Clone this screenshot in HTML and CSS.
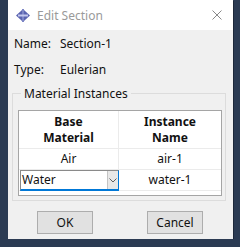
FILE: index.html
```html
<!DOCTYPE html>
<html lang="en">
<head>
  <meta charset="UTF-8">
  <title>Edit Section</title>
  <link rel="stylesheet" href="styles.css">
</head>
<body>
  <div class="dialog">
    <div class="titlebar">
      <svg class="app-icon" width="14" height="13" viewBox="0 0 14 13">
        <polygon points="0,6.5 6,1 6,12" fill="#5b64b0"/>
        <polygon points="14,6.5 8,1 8,12" fill="#5b64b0"/>
        <rect x="6" y="0" width="2" height="13" fill="#7d86c6"/>
        <rect x="2" y="5.5" width="10" height="2" fill="#c3c8ee"/>
      </svg>
      <span class="title">Edit Section</span>
      <svg class="close" width="10" height="10" viewBox="0 0 10 10">
        <path d="M0.5 0.5 L9.5 9.5 M9.5 0.5 L0.5 9.5" stroke="#888" stroke-width="1"/>
      </svg>
    </div>
    <div class="content">
      <div class="field"><span class="key">Name:</span><span>Section-1</span></div>
      <div class="field"><span class="key">Type:</span><span>Eulerian</span></div>
      <div class="group">
        <span class="legend">Material Instances</span>
        <div class="table">
          <div class="row head">
            <div class="cell">Base<br>Material</div>
            <div class="cell">Instance<br>Name</div>
          </div>
          <div class="row">
            <div class="cell">Air</div>
            <div class="cell">air-1</div>
          </div>
          <div class="row">
            <div class="cell combo">
              <span>Water</span>
              <span class="arrow">
                <svg width="8" height="5" viewBox="0 0 8 5"><path d="M0.5 0.5 L4 4 L7.5 0.5" fill="none" stroke="#606060" stroke-width="1"/></svg>
              </span>
            </div>
            <div class="cell">water-1</div>
          </div>
        </div>
      </div>
      <div class="buttons">
        <button class="btn">OK</button>
        <button class="btn">Cancel</button>
      </div>
    </div>
  </div>
</body>
</html>
```

FILE: styles.css
```css
body {
  margin: 0;
  background-color: #2b3b53;
  font-family: "Noto Sans", "Open Sans", sans-serif;
  font-size: 12px;
  color: #111;
  padding-left: 8px;
}
.dialog {
  width: 225px;
  height: 239px;
  background-color: #f0f0f0;
  display: flex;
  flex-direction: column;
  box-shadow: 1px 1px 0 #1d283a;
}
.titlebar {
  height: 30px;
  background-color: #fff;
  display: flex;
  align-items: center;
  padding-left: 8px;
  padding-right: 11px;
}
.app-icon {
  margin-right: 7px;
}
.title {
  color: #9a9a9a;
  flex: 1;
}
.content {
  flex: 1;
  padding: 1px 7px 0 4px;
  display: flex;
  flex-direction: column;
}
.field {
  display: flex;
  height: 26px;
  line-height: 16px;
  align-items: center;
  padding-left: 2px;
}
.key {
  width: 46px;
}
.group {
  position: relative;
  margin-top: 10px;
  height: 108px;
  box-sizing: border-box;
  border: 1px solid #dcdcdc;
  padding: 16px 3px 4px 5px;
}
.legend {
  position: absolute;
  top: -8px;
  left: 8px;
  padding: 0 3px;
  line-height: 16px;
  background-color: #f0f0f0;
}
.table {
  background-color: #fff;
  border: 1px solid #a5a5a5;
  height: 86px;
  box-sizing: border-box;
}
.row {
  display: grid;
  grid-template-columns: 100px 1fr;
  height: 20px;
  border-bottom: 1px solid #ebebeb;
}
.row.head {
  height: 37px;
  font-weight: bold;
}
.cell {
  display: flex;
  align-items: center;
  justify-content: center;
  text-align: center;
  line-height: 16px;
}
.cell:first-child {
  border-right: 1px solid #ebebeb;
}
.combo {
  justify-content: space-between;
  border: 1px solid #8a8a8a;
  border-bottom: 2px solid #0078d7;
  margin: 0 0 -1px 1px;
  padding-left: 1px;
  background-color: #fff;
}
.combo.cell:first-child {
  border-right: 1px solid #0078d7;
}
.arrow {
  width: 10px;
  height: 100%;
  background-color: #e8e8e8;
  border-left: 1px solid #c4c4c4;
  display: flex;
  align-items: center;
  justify-content: center;
}
.buttons {
  display: flex;
  justify-content: space-between;
  margin-top: 10px;
  padding: 0 23px 0 25px;
}
.btn {
  width: 56px;
  height: 23px;
  font-family: inherit;
  font-size: 12px;
  color: #111;
  background-color: #e1e1e1;
  border: 1px solid #adadad;
  padding: 0;
}
```
